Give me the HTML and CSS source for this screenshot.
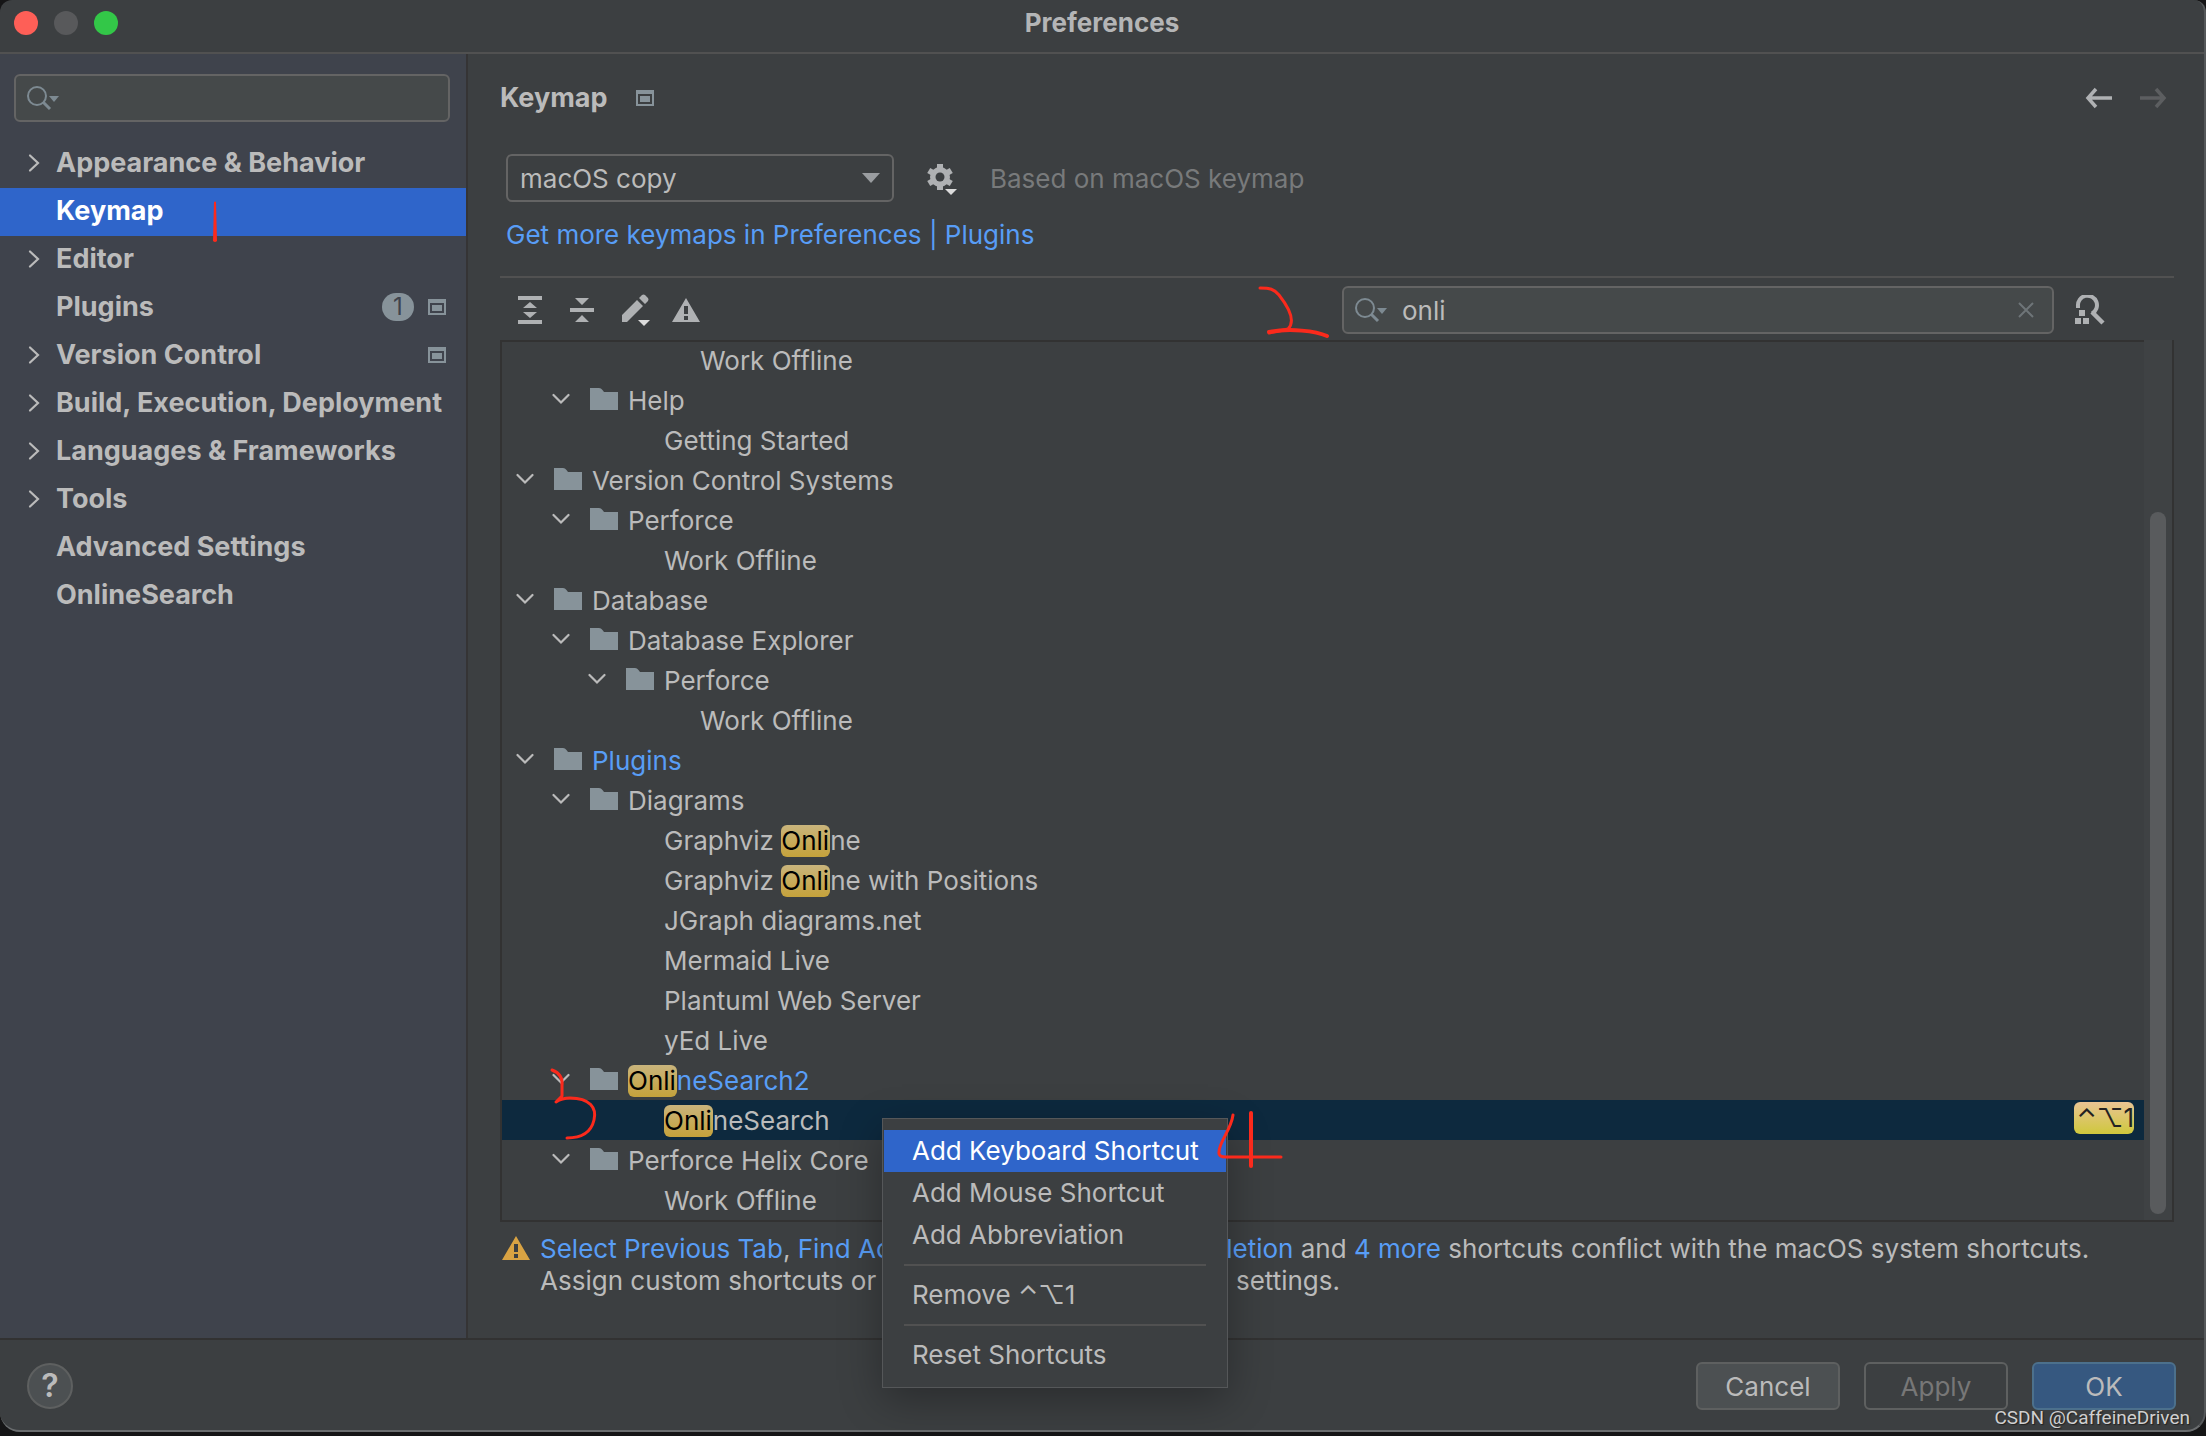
FILE: index.html
```html
<!DOCTYPE html>
<html lang="en">
<head>
<meta charset="utf-8">
<title>Preferences</title>
<link rel="stylesheet" href="styles.css">
</head>
<body>
<svg class="defs" aria-hidden="true">
  <symbol id="chev-r" viewBox="0 0 14 20"><path d="M2 2.500 10 10 2 17.500" fill="none" stroke="currentColor" stroke-width="2.200" stroke-linecap="round"/></symbol>
  <symbol id="chev-d" viewBox="0 0 18 12"><path d="M1.500 2 9 9.500 16.500 2" fill="none" stroke="currentColor" stroke-width="2.200" stroke-linecap="round"/></symbol>
  <symbol id="folder" viewBox="0 0 28 22"><path d="M0 0H9Q11 0 12.500 2L14 4H28V22H0Z" fill="currentColor"/></symbol>
  <symbol id="project" viewBox="0 0 18 16"><path fill-rule="evenodd" d="M0 0H18V16H0ZM2 4V14H16V4ZM4 6H14V12H4Z" fill="currentColor"/></symbol>
  <symbol id="search" viewBox="0 0 34 26"><circle cx="11" cy="11" r="9" fill="none" stroke="currentColor" stroke-width="2"/><path d="M17 17 24 24" stroke="currentColor" stroke-width="3"/><path d="M23 11H33L28 17Z" fill="currentColor"/></symbol>
  <symbol id="warn" viewBox="0 0 28 24"><path fill-rule="evenodd" d="M14 0 28 24H0ZM12 8V16H16V8ZM12 18V22H16V18Z" fill="currentColor"/></symbol>
</svg>
<div class="window">
  <header class="titlebar">
    <div class="lights"><button class="light red" aria-label="Close"></button><button class="light gray" aria-label="Minimize"></button><button class="light green" aria-label="Zoom"></button></div>
    <h1>Preferences</h1>
  </header>
  <div class="body">
    <aside class="sidebar">
      <label class="field"><svg class="search-ico"><use href="#search"/></svg><input type="text" aria-label="Search settings"></label>
      <nav>
        <a href="#"><svg class="cr"><use href="#chev-r"/></svg><span>Appearance &amp; Behavior</span></a>
        <a href="#" class="active"><i class="cr"></i><span>Keymap</span></a>
        <a href="#"><svg class="cr"><use href="#chev-r"/></svg><span>Editor</span></a>
        <a href="#"><i class="cr"></i><span>Plugins</span><b class="count">1</b><svg class="proj"><use href="#project"/></svg></a>
        <a href="#"><svg class="cr"><use href="#chev-r"/></svg><span>Version Control</span><svg class="proj"><use href="#project"/></svg></a>
        <a href="#"><svg class="cr"><use href="#chev-r"/></svg><span>Build, Execution, Deployment</span></a>
        <a href="#"><svg class="cr"><use href="#chev-r"/></svg><span>Languages &amp; Frameworks</span></a>
        <a href="#"><svg class="cr"><use href="#chev-r"/></svg><span>Tools</span></a>
        <a href="#"><i class="cr"></i><span>Advanced Settings</span></a>
        <a href="#"><i class="cr"></i><span>OnlineSearch</span></a>
      </nav>
    </aside>
    <main>
      <div class="heading">
        <h2>Keymap</h2><svg class="proj"><use href="#project"/></svg>
        <button class="icon arrow" aria-label="Back"><svg width="28" height="22" viewBox="0 0 28 22"><path d="M11 2 3 11 11 20M3 11H27" fill="none" stroke="#afb1b3" stroke-width="3.500"/></svg></button>
        <button class="icon arrow" aria-label="Forward" disabled><svg width="28" height="22" viewBox="0 0 28 22"><path d="M17 2 25 11 17 20M25 11H1" fill="none" stroke="#5c5e60" stroke-width="3.500"/></svg></button>
      </div>
      <div class="scheme">
        <div class="combo"><select aria-label="Keymap scheme"><option>macOS copy</option></select><svg width="18" height="10" viewBox="0 0 18 10"><path d="M0 0H18L9 10Z" fill="#9a9da0"/></svg></div>
        <button class="icon" aria-label="Keymap actions"><svg width="32" height="32" viewBox="0 0 32 32"><g fill="#afb1b3"><path d="M11 1H17V27H11Z"/><path d="M11 1H17V27H11Z" transform="rotate(60 14 14)"/><path d="M11 1H17V27H11Z" transform="rotate(120 14 14)"/><circle cx="14" cy="14" r="10"/></g><circle cx="14" cy="14" r="4.500" fill="#3c3f41"/><path d="M17 24H32V32H22Z" fill="#3c3f41"/><path d="M19 26H31L25 32Z" fill="#dcdcdc"/></svg></button>
        <span class="based">Based on macOS keymap</span>
      </div>
      <a href="#" class="more">Get more keymaps in Preferences | Plugins</a>
      <div class="toolbar">
        <button class="icon" aria-label="Expand all"><svg width="24" height="28" viewBox="0 0 24 28" fill="#afb1b3"><path d="M0 0H24V4H0ZM0 24H24V28H0ZM12 6 19 12H5ZM12 22 19 16H5Z"/></svg></button>
        <button class="icon" aria-label="Collapse all"><svg width="24" height="28" viewBox="0 0 24 28" fill="#afb1b3"><path d="M0 12H24V16H0ZM5 2H19L12 9ZM5 26H19L12 19Z"/></svg></button>
        <button class="icon edit" aria-label="Edit shortcut"><svg width="28" height="32" viewBox="0 0 28 32"><path d="M0 28V21L15 6 21 12 5 28ZM17 4 20 1Q21.500 0 23 1L26 4Q27 5.500 26 7L23 10Z" fill="#afb1b3"/><path d="M16 26H28L22 32Z" fill="#dcdcdc"/></svg></button>
        <button class="icon" aria-label="Show conflicts"><svg class="warn"><use href="#warn"/></svg></button>
        <label class="field filter"><svg class="search-ico"><use href="#search"/></svg><input type="text" value="onli" aria-label="Filter actions"><svg width="16" height="16" viewBox="0 0 16 16"><path d="M1 1 15 15M15 1 1 15" stroke="#6e7578" stroke-width="2"/></svg></label>
        <button class="icon find" aria-label="Find by shortcut"><svg width="32" height="30" viewBox="0 0 32 30"><path d="M4 13V11A9.500 9.500 0 1 1 18 18.500" fill="none" stroke="#afb1b3" stroke-width="4"/><path d="M18 17 29 28" stroke="#afb1b3" stroke-width="4.500"/><path d="M5 15H11V21H5ZM1 23H7V29H1ZM9 23H15V29H9Z" fill="#afb1b3"/></svg></button>
      </div>
      <div class="tree">
        <ul>
          <li class="l4">Work Offline</li>
          <li class="l2"><svg class="cd"><use href="#chev-d"/></svg><svg class="fold"><use href="#folder"/></svg>Help</li>
          <li class="l3">Getting Started</li>
          <li class="l1"><svg class="cd"><use href="#chev-d"/></svg><svg class="fold"><use href="#folder"/></svg>Version Control Systems</li>
          <li class="l2"><svg class="cd"><use href="#chev-d"/></svg><svg class="fold"><use href="#folder"/></svg>Perforce</li>
          <li class="l3">Work Offline</li>
          <li class="l1"><svg class="cd"><use href="#chev-d"/></svg><svg class="fold"><use href="#folder"/></svg>Database</li>
          <li class="l2"><svg class="cd"><use href="#chev-d"/></svg><svg class="fold"><use href="#folder"/></svg>Database Explorer</li>
          <li class="l3"><svg class="cd"><use href="#chev-d"/></svg><svg class="fold"><use href="#folder"/></svg>Perforce</li>
          <li class="l4">Work Offline</li>
          <li class="l1 blue"><svg class="cd"><use href="#chev-d"/></svg><svg class="fold"><use href="#folder"/></svg>Plugins</li>
          <li class="l2"><svg class="cd"><use href="#chev-d"/></svg><svg class="fold"><use href="#folder"/></svg>Diagrams</li>
          <li class="l3"><span>Graphviz <mark>Onli</mark>ne</span></li>
          <li class="l3"><span>Graphviz <mark>Onli</mark>ne with Positions</span></li>
          <li class="l3">JGraph diagrams.net</li>
          <li class="l3">Mermaid Live</li>
          <li class="l3">Plantuml Web Server</li>
          <li class="l3">yEd Live</li>
          <li class="l2 blue"><svg class="cd"><use href="#chev-d"/></svg><svg class="fold"><use href="#folder"/></svg><mark>Onli</mark>neSearch2</li>
          <li class="l3 selected"><mark>Onli</mark>neSearch<kbd>⌃⌥1</kbd></li>
          <li class="l2"><svg class="cd"><use href="#chev-d"/></svg><svg class="fold"><use href="#folder"/></svg>Perforce Helix Core</li>
          <li class="l3">Work Offline</li>
        </ul>
        <div class="track"><div class="thumb"></div></div>
      </div>
      <div class="conflict">
        <svg class="warn"><use href="#warn"/></svg>
        <p><a href="#">Select Previous Tab</a>, <a href="#">Find Action</a>, &nbsp;<a href="#">Type-Matching Completion</a> and <a href="#">4 more</a> shortcuts conflict with the macOS system shortcuts.<br>Assign custom shortcuts or change your macOS system settings.</p>
      </div>
    </main>
  </div>
  <footer>
    <button class="help" aria-label="Help">?</button>
    <button class="btn">Cancel</button>
    <button class="btn apply" disabled>Apply</button>
    <button class="btn ok">OK</button>
  </footer>
</div>
<div class="menu" role="menu">
  <button role="menuitem" class="hover">Add Keyboard Shortcut</button>
  <button role="menuitem">Add Mouse Shortcut</button>
  <button role="menuitem">Add Abbreviation</button>
  <hr>
  <button role="menuitem">Remove ⌃⌥1</button>
  <hr>
  <button role="menuitem">Reset Shortcuts</button>
</div>
<svg class="ink" viewBox="0 0 2206 1436" aria-hidden="true">
  <path d="M214 202 213 241Q215 243 217 241L216 202Q215 201 214 202Z" fill="#fb2a1c" stroke="none"/>
  <path d="M1260 288C1270 288 1274 289 1279 295C1290 309 1295 322 1288 329Q1280 331 1269 333"/>
  <path d="M1269 332C1290 328 1316 331 1327 336" stroke-width="4"/>
  <path d="M552 1070C560 1073 563 1078 562 1086V1096L556 1102Q562 1098 570 1098C590 1098 597 1108 594 1120C591 1133 581 1138 567 1138"/>
  <path d="M1233 1115C1231 1130 1219 1142 1219 1152Q1218 1157 1226 1157H1281"/>
  <path d="M1251 1113V1166" stroke-width="4"/>
</svg>
<div class="watermark">CSDN @CaffeineDriven</div>
</body>
</html>
```
FILE: styles.css
```css
* { box-sizing: border-box; }
body { margin: 0; min-height: 100vh; padding-bottom: 4px; background: #151516; color: #bbbbbb; font: 26px/32px Inter, "Noto Sans", sans-serif; display: flex; flex-direction: column; position: relative; }
h1, h2, p, ul { margin: 0; padding: 0; font-size: inherit; }
button, input, select { font: inherit; color: inherit; border: 0; background: none; margin: 0; padding: 0; }
a { color: #589df6; text-decoration: none; }
svg { flex: none; display: block; }
.defs { position: absolute; width: 0; height: 0; }
.window { flex: 1; display: flex; flex-direction: column; background: #3c3f41; border-right: 2px solid #55585a; border-bottom: 2px solid #6a6d6f; border-radius: 12px 12px 20px 20px; overflow: hidden; }
.titlebar { height: 54px; border-bottom: 2px solid #515151; display: grid; grid-template-columns: 1fr auto 1fr; align-items: center; padding: 0 14px 6px; }
.titlebar h1 { font-weight: 700; color: #b4b5b6; }
.lights { display: flex; gap: 16px; }
.light { width: 24px; height: 24px; border-radius: 50%; }
.red { background: #fe5f57; }
.gray { background: #58595b; }
.green { background: #33c748; }
.body { flex: 1; display: flex; }
.sidebar { width: 468px; flex: none; background: #3f434c; border-right: 2px solid #353435; padding-top: 20px; }
.field { display: flex; align-items: center; height: 48px; border: 2px solid #646464; border-radius: 6px; background: #45494a; }
.sidebar .field { margin: 0 16px 18px 14px; }
.search-ico { width: 34px; height: 26px; margin-left: 10px; color: #7d8a92; }
.field input { flex: 1; min-width: 0; outline: 0; padding: 0 14px; }
nav a { display: flex; align-items: center; height: 48px; padding: 0 20px 2px 28px; color: #bbbbbb; font-size: 27px; font-weight: 700; white-space: nowrap; }
nav .active { background: #2f65ca; color: #fff; }
nav span { flex: 1; }
.cr { width: 14px; height: 20px; margin-right: 14px; }
.proj { width: 18px; height: 16px; color: #87939a; }
.count { background: #87939a; color: #3f434c; width: 32px; height: 28px; border-radius: 14px; font-size: 24px; line-height: 28px; font-weight: 400; text-align: center; margin-right: 14px; }
main { flex: 1; min-width: 0; padding: 22px 30px 0 32px; display: flex; flex-direction: column; }
.heading { display: flex; align-items: center; height: 44px; margin-bottom: 34px; }
.heading h2 { font-size: 27px; font-weight: 700; margin-right: 28px; }
.heading .proj { margin-right: auto; }
.arrow { margin: 0 7px 0 19px; }
.scheme { display: flex; align-items: center; height: 48px; padding-left: 6px; }
.combo { display: flex; align-items: center; width: 388px; height: 48px; border: 2px solid #646464; border-radius: 6px; padding: 0 12px; margin-right: 32px; }
.combo select { flex: 1; appearance: none; outline: 0; padding-top: 2px; }
.scheme .icon, .based { padding-top: 2px; }
.based { color: #787a7b; margin-left: 32px; }
.more { align-self: flex-start; padding: 17px 0 25px 6px; }
.toolbar { border-top: 2px solid #515151; height: 64px; display: flex; align-items: center; padding: 2px 68px 0 18px; gap: 28px; }
.edit { margin-right: -6px; }
.warn { width: 28px; height: 24px; color: #afb1b3; }
.filter { width: 712px; margin-left: auto; }
.filter > svg:last-child { margin-right: 18px; }
.filter input { padding-top: 2px; }
.find { margin-left: -8px; }
.tree { border: solid #323232; border-width: 0 2px 2px; box-shadow: inset 0 2px #323232; display: flex; }
.tree ul { flex: 1; list-style: none; }
.tree li { height: 40px; display: flex; align-items: center; white-space: nowrap; padding-top: 2px; }
.l1 { padding-left: 14px; }
.l2 { padding-left: 50px; }
.l3 { padding-left: 86px; }
.l4 { padding-left: 122px; }
.l3::before, .l4::before { content: ""; width: 76px; }
.l3:has(.fold)::before { display: none; }
.cd { width: 18px; height: 12px; margin: 0 20px 4px 0; color: #bbbbbb; }
.fold { width: 28px; height: 22px; color: #87939a; margin: 0 10px 4px 0; }
.blue { color: #589df6; }
mark { color: #000; background: linear-gradient(#c9b47c, #c5a23b); border-radius: 6px; display: inline-block; line-height: 32px; padding-right: 1px; }
.selected { background: #0d293e; padding-right: 10px; }
kbd { margin: 0 0 6px auto; font: inherit; color: #222; background: linear-gradient(#e9c494, #cfc83c); border-radius: 6px; min-width: 60px; height: 32px; text-align: right; }
.track { width: 28px; background: #3f4244; padding: 172px 6px 6px; display: flex; }
.thumb { flex: 1; background: #595b5d; border-radius: 8px; }
.conflict { display: flex; padding: 11px 0 0 2px; gap: 10px; white-space: nowrap; }
.conflict .warn { color: #d9a343; margin-top: 3px; }
footer { height: 92px; border-top: 2px solid #323232; display: flex; align-items: center; gap: 24px; padding: 2px 28px 0 27px; }
.help { width: 46px; height: 46px; border-radius: 50%; background: #4c5052; border: 2px solid #5e6060; margin-right: auto; font-weight: 600; font-size: 32px; }
.btn { width: 144px; height: 48px; border: 2px solid #5e6060; border-radius: 6px; background: #4c5052; padding-top: 2px; }
.apply { background: none; color: #777; }
.ok { background: #365880; border-color: #4c708c; }
.menu { position: absolute; left: 882px; top: 1118px; width: 346px; background: #3c3f41; border: 1px solid #555759; padding: 11px 1px; box-shadow: 0 12px 40px rgba(0, 0, 0, .3); }
.menu button { display: block; width: 100%; height: 42px; padding-left: 28px; text-align: left; white-space: nowrap; }
.menu .hover { background: #2f65ca; color: #fff; }
.menu hr { border: 0; height: 2px; background: #515151; margin: 8px 20px; }
.ink { position: absolute; left: 0; top: 0; width: 2206px; height: 1436px; fill: none; stroke: #fb2a1c; stroke-width: 3; stroke-linecap: round; stroke-linejoin: round; pointer-events: none; }
.watermark { position: absolute; right: 16px; bottom: 4px; font: 19px/28px Roboto, sans-serif; color: #d0d0d0; text-shadow: 1px 1px 1px #222; }
```
